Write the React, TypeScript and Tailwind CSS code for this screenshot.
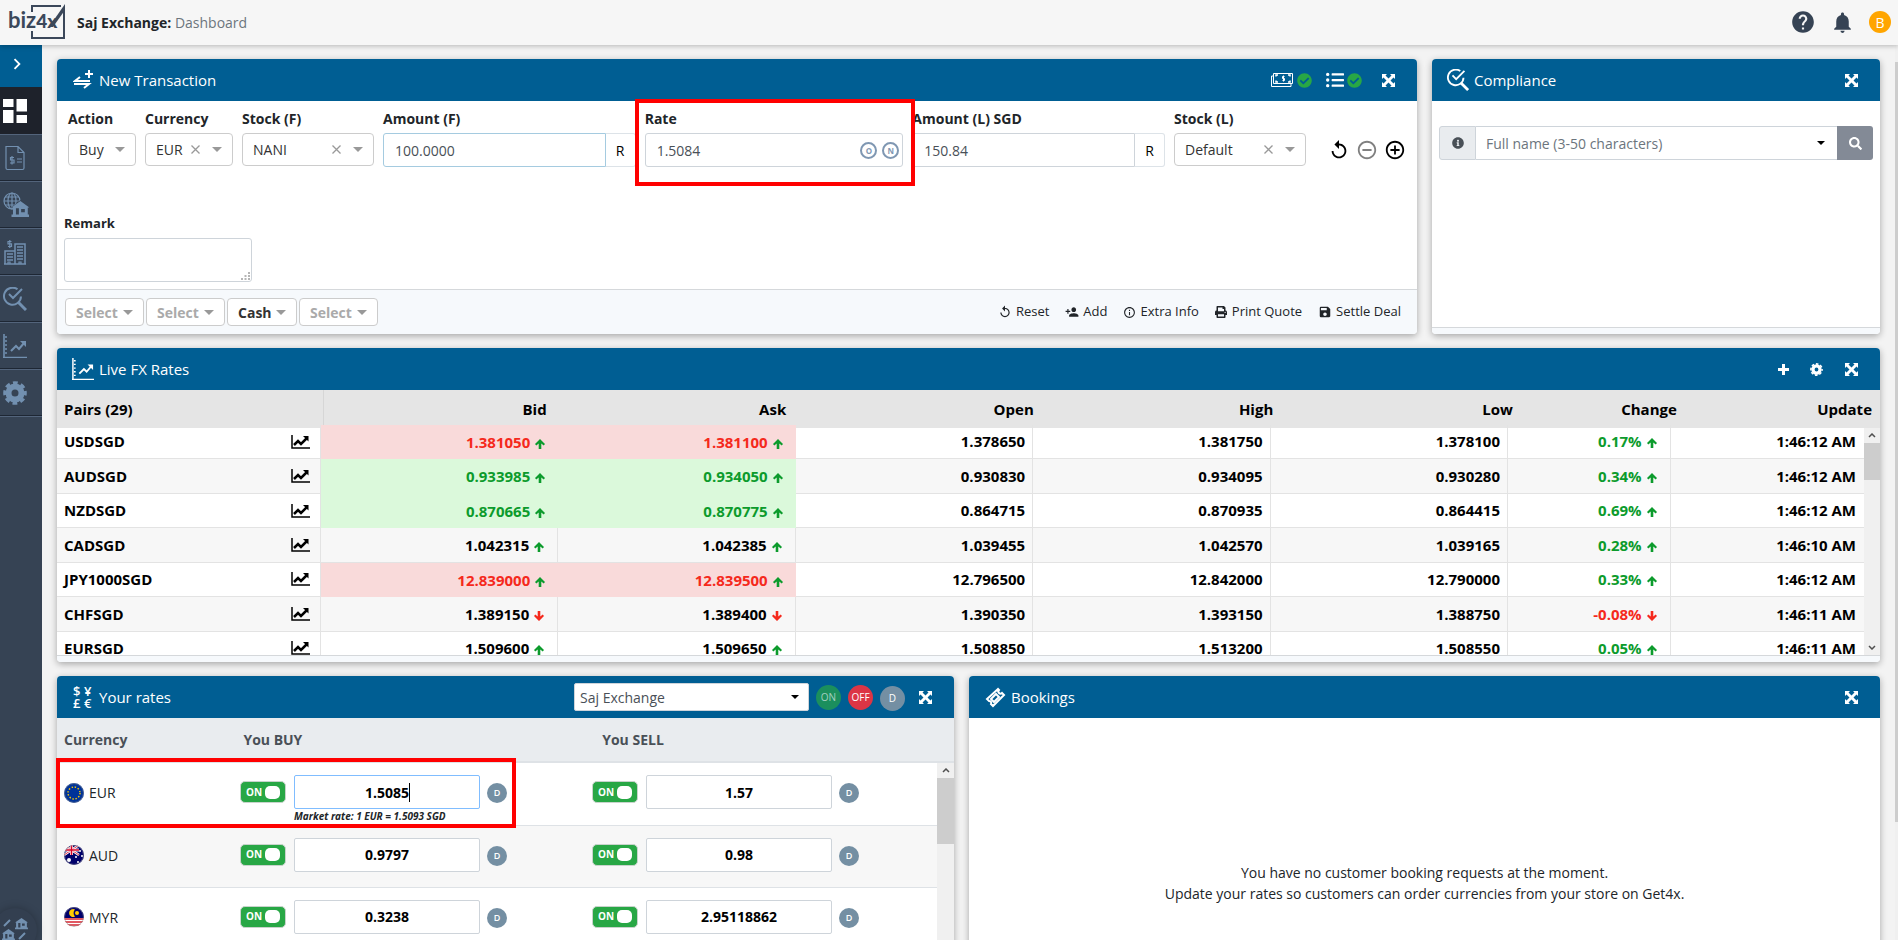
import type { PropsWithChildren, ReactNode } from "react";
import { FaCheckCircle, FaInfoCircle, FaListUl, FaPrint, FaSearch } from "react-icons/fa";
import {
  MdAddCircleOutline,
  MdChevronRight,
  MdHelp,
  MdInfoOutline,
  MdNotifications,
  MdPersonAdd,
  MdRemoveCircleOutline,
  MdReplay,
  MdSave,
} from "react-icons/md";
import clsx from "clsx";

type Trend = "up" | "down";
type Flash = "red" | "green" | null;

interface Pair {
  name: string;
  bid: string;
  ask: string;
  open: string;
  high: string;
  low: string;
  change: string;
  trend: Trend;
  flash: Flash;
  update: string;
}

const PAIRS: Pair[] = [
  { name: "USDSGD", bid: "1.381050", ask: "1.381100", open: "1.378650", high: "1.381750", low: "1.378100", change: "0.17%", trend: "up", flash: "red", update: "1:46:12 AM" },
  { name: "AUDSGD", bid: "0.933985", ask: "0.934050", open: "0.930830", high: "0.934095", low: "0.930280", change: "0.34%", trend: "up", flash: "green", update: "1:46:12 AM" },
  { name: "NZDSGD", bid: "0.870665", ask: "0.870775", open: "0.864715", high: "0.870935", low: "0.864415", change: "0.69%", trend: "up", flash: "green", update: "1:46:12 AM" },
  { name: "CADSGD", bid: "1.042315", ask: "1.042385", open: "1.039455", high: "1.042570", low: "1.039165", change: "0.28%", trend: "up", flash: null, update: "1:46:10 AM" },
  { name: "JPY1000SGD", bid: "12.839000", ask: "12.839500", open: "12.796500", high: "12.842000", low: "12.790000", change: "0.33%", trend: "up", flash: "red", update: "1:46:12 AM" },
  { name: "CHFSGD", bid: "1.389150", ask: "1.389400", open: "1.390350", high: "1.393150", low: "1.388750", change: "-0.08%", trend: "down", flash: null, update: "1:46:11 AM" },
  { name: "EURSGD", bid: "1.509600", ask: "1.509650", open: "1.508850", high: "1.513200", low: "1.508550", change: "0.05%", trend: "up", flash: null, update: "1:46:11 AM" },
];

const RATES = [
  { code: "EUR", buy: "1.5085", sell: "1.57", market: "Market rate: 1 EUR = 1.5093 SGD" },
  { code: "AUD", buy: "0.9797", sell: "0.98" },
  { code: "MYR", buy: "0.3238", sell: "2.95118862" },
];

/* ---------- icons ---------- */

function Logo() {
  return (
    <svg width="60" height="36" viewBox="0 0 60 36" role="img" aria-label="biz4x">
      <path d="M25 8V2H54M25 27v7h32V4" fill="none" stroke="#3b485a" strokeWidth="2" />
      <path d="M58 0 42 23h4L58 6z" fill="#3b485a" />
      <text x="1" y="24" fontFamily="Lato, sans-serif" fontWeight="700" fontSize="22" fill="#3b485a">
        biz<tspan fontWeight="900" fontSize="19">4x</tspan>
      </text>
    </svg>
  );
}

function TransferIcon() {
  return (
    <svg width="20" height="20" viewBox="0 0 20 20" fill="none" stroke="currentColor" strokeWidth="2">
      <path d="M17 11H2l5-4M1 14h15l-5 4M16 0v8M12 4h8" />
    </svg>
  );
}

function ExpandIcon() {
  return (
    <svg width="13" height="13" viewBox="0 0 13 13" fill="currentColor">
      <path d="M0 0h5L3.500 1.500l3 3 3-3L8 0h5v5l-1.500-1.500-3 3 3 3L13 8v5H8l1.500-1.500-3-3-3 3L5 13H0V8l1.500 1.500 3-3-3-3L0 5z" />
    </svg>
  );
}

function PlusIcon() {
  return (
    <svg width="11" height="11" viewBox="0 0 11 11" fill="currentColor">
      <path d="M4 0h3v4h4v3H7v4H4V7H0V4h4z" />
    </svg>
  );
}

function GearIcon({ size }: { size: number }) {
  return (
    <svg width={size} height={size} viewBox="0 0 24 24" fill="none" stroke="currentColor">
      <circle cx="12" cy="12" r="6.500" strokeWidth="6" />
      <circle cx="12" cy="12" r="10.300" strokeWidth="3" strokeDasharray="4.800 3.290" strokeDashoffset="2.400" />
    </svg>
  );
}

function AxisChartIcon({ size }: { size: number }) {
  return (
    <svg width={size} height={size} viewBox="0 0 24 24" fill="none" stroke="currentColor">
      <path d="M1 0v24M0 23.500h24" strokeWidth="1.600" />
      <path d="M2 3h2M2 7h2M2 11h2M2 15h2M2 19h2" strokeWidth="1.500" />
      <path d="m8 17 5-5 3 3 5-6" strokeWidth="2" />
      <path d="M17 7h6v6z" fill="currentColor" stroke="none" />
    </svg>
  );
}

function SearchCheckIcon({ size }: { size: number }) {
  return (
    <svg width={size} height={size} viewBox="0 0 24 24" fill="none" stroke="currentColor">
      <path d="M14.500 2.300A8.500 8.500 0 1 0 18 9.500" strokeWidth="2" />
      <path d="m6 7 4 4 9-9" strokeWidth="2" />
      <path d="m15 15 8 8" strokeWidth="3" />
    </svg>
  );
}

function TicketIcon() {
  return (
    <svg width="21" height="21" viewBox="0 0 21 21" fill="none" stroke="currentColor" strokeWidth="2">
      <path d="M13 2 2 12l2 2a2 2 0 0 1 2 3l2 2 11-11-2-2a2 2 0 0 1-3-3z" />
      <path d="m6 12 5-5 3 3-5 5z" />
    </svg>
  );
}

function CurrenciesIcon() {
  return (
    <svg width="20" height="24" viewBox="0 0 20 24" fill="currentColor" fontSize="13" fontWeight="600" aria-hidden="true">
      <text x="0" y="11">$</text>
      <text x="11" y="11">¥</text>
      <text x="0" y="23">£</text>
      <text x="11" y="23">€</text>
    </svg>
  );
}

function CashIcon() {
  return (
    <svg width="24" height="16" viewBox="0 0 24 16" fill="none" stroke="currentColor">
      <path d="M3.500 1.500h19v10h-19zM3 4H1.500v10.500H21V12" />
      <path d="M6 4.500V3h2M18 3h2v1.500M6 8.500V10h2M18 10h2V8.500" strokeWidth="1.500" />
      <path d="M14.500 4.500h-2v2h2v2h-2M13.500 3.500v6" />
    </svg>
  );
}

function LineChartIcon() {
  return (
    <svg width="19" height="14" viewBox="0 0 19 14" fill="none" stroke="currentColor" strokeWidth="2">
      <path d="M1 0v13h18" strokeWidth="1.500" />
      <path d="m3 10 4-4 3 3 6-6" strokeWidth="2.500" />
      <path d="M12 1h5.500v5.500z" fill="currentColor" stroke="none" />
    </svg>
  );
}

function HouseShape() {
  return <path fillRule="evenodd" d="M12 0 0 8h2v9H0v3h24v-3h-2V8h2zM6 9h4v8H6zM13 10h5v4h-5z" />;
}

function DocumentIcon() {
  return (
    <svg width="24" height="26" viewBox="0 0 24 26" fill="none" stroke="currentColor">
      <path d="M3 1.500h12l6 6V23a1.500 1.500 0 0 1-1.500 1.500h-15A1.500 1.500 0 0 1 3 23zM15 1.500v6h6" strokeWidth="1.200" />
      <path d="M11 12.500H7.500v2.500H11v3H7M9 11v8.500M14 14h5M14 17h5" strokeWidth="1.200" />
    </svg>
  );
}

function BranchIcon() {
  return (
    <svg width="26" height="26" viewBox="0 0 26 26" fill="currentColor">
      <g fill="none" stroke="currentColor" strokeWidth="1.200">
        <circle cx="9" cy="9" r="8" />
        <ellipse cx="9" cy="9" rx="4" ry="8" />
        <path d="M9 1v16M1 9h16M2 5h14M2 13h14" />
      </g>
      <path d="M17.500 8 8 16h2v9h16v-9z" fill="#364354" />
      <g transform="translate(8.500 9) scale(.74 .8)">
        <HouseShape />
      </g>
    </svg>
  );
}

function BuildingsIcon() {
  return (
    <svg width="24" height="26" viewBox="0 0 24 26" fill="none" stroke="currentColor">
      <path d="M2 25V12h10M12 25V5h10v20M1 25h22" strokeWidth="1.500" />
      <path d="M4 15h6M4 18h6M4 21h6M14 8h6M14 11h6M14 14h6M14 17h6M14 20h6" strokeWidth="1.500" />
      <path d="M8.500 2.500H5v2.300h3.500v2.700H5M6.800 1v8M5 25v-2h2v2M16 25v-2h2v2" strokeWidth="1.200" />
    </svg>
  );
}

function Caret({ className }: { className?: string }) {
  return (
    <svg width="10" height="5" viewBox="0 0 10 5" className={clsx("pointer-events-none shrink-0", className)}>
      <path d="M0 0h10L5 5z" fill="currentColor" />
    </svg>
  );
}

function Flag({ code }: { code: string }) {
  return (
    <svg width="20" height="20" viewBox="0 0 20 20" className="shrink-0 rounded-full" aria-hidden="true">
      {code === "EUR" && (
        <>
          <path d="M0 0h20v20H0z" fill="#003399" />
          <circle cx="10" cy="10" r="6" fill="none" stroke="#ffcc00" strokeWidth="1.400" strokeDasharray="1.400 1.740" />
        </>
      )}
      {code === "AUD" && (
        <>
          <path d="M0 0h20v20H0z" fill="#00006b" />
          <path d="m0 0 15 10M15 0 0 10" stroke="#fff" strokeWidth="2.500" />
          <path d="m0 0 15 10M15 0 0 10" stroke="#e0314b" />
          <path d="M7.500 0v10M0 5h15" stroke="#fff" strokeWidth="3" />
          <path d="M7.500 0v10M0 5h15" stroke="#d80027" strokeWidth="1.600" />
          <g fill="#fff">
            <circle cx="5" cy="15" r="2" />
            <circle cx="14" cy="17" r="1" />
            <circle cx="12" cy="12" r="1" />
            <circle cx="18" cy="11" r="1" />
            <circle cx="16" cy="6" r="1" />
          </g>
        </>
      )}
      {code === "MYR" && (
        <>
          <path d="M0 0h20v20H0z" fill="#fff" />
          <path d="M0 12h20M0 15h20M0 18h20" stroke="#d8232f" strokeWidth="1.500" />
          <path d="M0 0h20v11H0z" fill="#00006b" />
          <path d="M11 2.500a4 4 0 1 0 0 7 5 5 0 0 1 0-7" fill="#ffcc00" />
          <circle cx="13" cy="6" r="2" fill="#ffcc00" />
        </>
      )}
      <circle cx="10" cy="10" r="9.500" fill="none" stroke="#888" strokeOpacity=".6" />
    </svg>
  );
}

/* ---------- shared pieces ---------- */

interface PanelProps extends PropsWithChildren {
  title: string;
  icon: ReactNode;
  actions?: ReactNode;
}

function Panel({ title, icon, actions, children }: PanelProps) {
  return (
    <section className="flex min-w-0 flex-col rounded-[4px] bg-white shadow-[0_2px_7px_rgba(0,0,0,0.32)]">
      <header className="flex h-[42px] shrink-0 items-center gap-1 rounded-t-[4px] bg-[#005e93] pl-[14px] pr-[22px] text-white">
        <span className="flex w-6 justify-center">{icon}</span>
        <h2 className="text-[15px]">{title}</h2>
        <div className="ml-auto flex items-center">
          {actions}
          <button type="button" aria-label={`Expand ${title}`}>
            <ExpandIcon />
          </button>
        </div>
      </header>
      {children}
    </section>
  );
}

interface PickerProps {
  id: string;
  value: string;
  clearable?: boolean;
}

function Picker({ id, value, clearable }: PickerProps) {
  return (
    <div className="flex h-[33px] items-center rounded-[4px] border border-[#ccc] bg-white pl-[10px] pr-[10px] text-[#333]">
      <select id={id} className="min-w-0 flex-1 appearance-none bg-transparent outline-none">
        <option>{value}</option>
      </select>
      {clearable && (
        <button type="button" aria-label={`Clear ${id}`} className="mr-3 text-[#999]">
          <svg width="9" height="9" viewBox="0 0 9 9" stroke="currentColor" strokeWidth="1.300">
            <path d="m.5.5 8 8M8.500.5l-8 8" />
          </svg>
        </button>
      )}
      <Caret className="text-[#999]" />
    </div>
  );
}

function Field({ id, label, children }: PropsWithChildren<{ id: string; label: string }>) {
  return (
    <div className="relative min-w-0">
      <label htmlFor={id} className="mb-1 block whitespace-nowrap font-bold leading-5 text-[#212529]">
        {label}
      </label>
      {children}
    </div>
  );
}

function AmountInput({ id, value, active }: { id: string; value: string; active?: boolean }) {
  return (
    <div className="flex h-[34px]">
      <input
        id={id}
        defaultValue={value}
        className={clsx(
          "min-w-0 flex-1 rounded-l-[3px] border px-[11px] text-[#495057] outline-none",
          active ? "border-[#a5cbe0]" : "border-[#ced4da]",
        )}
      />
      <button type="button" className="w-[30px] rounded-r-[3px] border border-l-0 border-[#dde3e8] text-black">
        R
      </button>
    </div>
  );
}

function FooterPicker({ id, value, width }: { id: string; value: string; width: string }) {
  return (
    <div className={clsx("flex h-7 items-center rounded-[4px] border border-[#ccc] bg-white px-[10px]", width)}>
      <select
        id={id}
        aria-label={id}
        className={clsx(
          "min-w-0 flex-1 appearance-none bg-transparent font-bold outline-none",
          value === "Select" ? "text-[#aaa]" : "text-[#333]",
        )}
      >
        <option>{value}</option>
      </select>
      <Caret className="text-[#999]" />
    </div>
  );
}

function ScrollArrow({ down }: { down?: boolean }) {
  return (
    <svg width="8" height="5" viewBox="0 0 8 5" fill="none" stroke="#505050" strokeWidth="1.500">
      <path d={down ? "m1 1 3 3 3-3" : "m1 4 3-3 3 3"} />
    </svg>
  );
}

function TrendArrow({ trend }: { trend: Trend }) {
  return (
    <svg
      width="10"
      height="10"
      viewBox="0 0 10 10"
      fill="currentColor"
      className={clsx("ml-[5px] inline", trend === "up" ? "text-[#0c9b2c]" : "rotate-180 text-[#f5291c]")}
    >
      <path d="m5 0 5 5-1.300 1.400-2.400-2V10H3.700V4.400l-2.400 2L0 5z" />
    </svg>
  );
}

/* ---------- page parts ---------- */

function TopBar() {
  return (
    <header className="relative z-10 flex h-[45px] shrink-0 items-center bg-[#f6f6f6] pb-px pl-[7px] pr-[7px] shadow-[0_1px_5px_rgba(0,0,0,0.25)]">
      <Logo />
      <h1 className="ml-[10px] text-[#212529]">
        <b>Saj Exchange:</b> <span className="text-[#6c757d]">Dashboard</span>
      </h1>
      <div className="ml-auto flex items-center text-[#364354]">
        <button type="button" aria-label="Help">
          <MdHelp size={26} />
        </button>
        <button type="button" aria-label="Notifications" className="ml-[14px]">
          <MdNotifications size={25} />
        </button>
        <button type="button" className="ml-[14px] size-[22px] rounded-full bg-[#ffa500] text-white">
          B
        </button>
      </div>
    </header>
  );
}

const NAV_ITEMS = [
  { label: "Documents", icon: <DocumentIcon /> },
  { label: "Branches", icon: <BranchIcon /> },
  { label: "Accounts", icon: <BuildingsIcon /> },
  { label: "Compliance", icon: <SearchCheckIcon size={24} /> },
  { label: "Rates", icon: <AxisChartIcon size={24} /> },
  { label: "Settings", icon: <GearIcon size={24} /> },
];

function Sidebar() {
  return (
    <nav className="flex w-[42px] shrink-0 flex-col bg-[#364354] text-[#7290b0]">
      <button type="button" aria-label="Open menu" className="flex h-[42px] shrink-0 items-center justify-center bg-[#005e93] pb-1 pr-2 text-white">
        <MdChevronRight size={22} />
      </button>
      <a href="#dashboard" aria-label="Dashboard" className="flex h-[47px] shrink-0 items-center bg-[#1e222b] pl-[3px] text-white">
        <svg width="24" height="24" viewBox="0 0 24 24" fill="currentColor">
          <path d="M0 0h10.500v8H0zM13.500 0H24v12.500H13.500zM0 11h10.500v13H0zM13.500 16H24v8H13.500z" />
        </svg>
      </a>
      {NAV_ITEMS.map((item) => (
        <a
          key={item.label}
          href={`#${item.label.toLowerCase()}`}
          aria-label={item.label}
          className="flex h-[47px] shrink-0 items-center border-b border-t border-b-[#1e2734] border-t-[#53647b] pl-[3px]"
        >
          {item.icon}
        </a>
      ))}
      <div className="border-t border-[#53647b]" />
      <button
        type="button"
        aria-label="Switch branch"
        className="-mb-3 -ml-[7px] mt-auto flex size-11 shrink-0 items-center justify-center rounded-full bg-[#333f50] shadow-[0_0_8px_rgba(0,0,0,0.25)]"
      >
        <svg width="26" height="24" viewBox="0 0 26 24" fill="currentColor">
          <g transform="translate(13 0) scale(.54 .56)">
            <HouseShape />
          </g>
          <g transform="translate(0 11) scale(.54 .56)">
            <HouseShape />
          </g>
          <path d="m2 8 6-6M17 21l6-6" stroke="currentColor" strokeWidth="2" />
        </svg>
      </button>
    </nav>
  );
}

function NewTransaction() {
  return (
    <Panel
      title="New Transaction"
      icon={<TransferIcon />}
      actions={
        <>
          <button type="button" aria-label="Cash status" className="mr-[14px] flex items-center gap-[3px]">
            <CashIcon />
            <FaCheckCircle size={15} className="text-[#28a745]" />
          </button>
          <button type="button" aria-label="List status" className="mr-5 flex items-center gap-[3px]">
            <FaListUl size={18} />
            <FaCheckCircle size={15} className="text-[#28a745]" />
          </button>
        </>
      }
    >
      <form className="flex flex-1 flex-col">
        <div className="grid grid-cols-[68px_88px_132px_253fr_259fr_253fr_132px_auto] gap-x-[9px] pl-[11px] pr-[11px] pt-2">
          <Field id="action" label="Action">
            <Picker id="action" value="Buy" />
          </Field>
          <Field id="currency" label="Currency">
            <Picker id="currency" value="EUR" clearable />
          </Field>
          <Field id="stock-f" label="Stock (F)">
            <Picker id="stock-f" value="NANI" clearable />
          </Field>
          <Field id="amount-f" label="Amount (F)">
            <AmountInput id="amount-f" value="100.0000" active />
          </Field>
          <Field id="rate" label="Rate">
            <div className="flex h-[34px] items-center gap-[5px] rounded-[3px] border border-[#ced4da] pr-[3px]">
              <input id="rate" defaultValue="1.5084" className="h-full min-w-0 flex-1 px-[11px] text-[#495057] outline-none" />
              <button type="button" className="size-[17px] rounded-full border-2 border-[#7f97b2] text-[8px]/[13px] font-bold text-[#7f97b2]">
                O
              </button>
              <button type="button" className="size-[17px] rounded-full border-2 border-[#7f97b2] text-[8px]/[13px] font-bold text-[#7f97b2]">
                N
              </button>
            </div>
            <div className="pointer-events-none absolute -bottom-[19px] -left-[10px] -right-3 -top-[10px] z-10 border-4 border-[#ff0000]" />
          </Field>
          <Field id="amount-l" label="Amount (L) SGD">
            <AmountInput id="amount-l" value="150.84" />
          </Field>
          <Field id="stock-l" label="Stock (L)">
            <Picker id="stock-l" value="Default" clearable />
          </Field>
          <div className="flex items-center gap-[6px] self-end pb-[6px] pl-[13px] text-black">
            <button type="button" aria-label="Reset row">
              <MdReplay size={22} />
            </button>
            <button type="button" aria-label="Remove row" className="text-[#808080]">
              <MdRemoveCircleOutline size={22} />
            </button>
            <button type="button" aria-label="Add row">
              <MdAddCircleOutline size={22} />
            </button>
          </div>
        </div>
        <div className="flex flex-col items-start pl-[7px] pt-[46px]">
          <label htmlFor="remark" className="mb-[5px] text-[13px]/5 font-bold text-[#212529]">
            Remark
          </label>
          <div className="relative flex">
            <textarea id="remark" className="h-11 w-[188px] resize-none rounded-[3px] border border-[#ced4da] outline-none" />
            <svg width="9" height="9" viewBox="0 0 9 9" fill="#b5b5b5" className="absolute bottom-[2px] right-[2px]">
              <path d="M0 7h2v2H0zM3.500 4h2v2h-2zM3.500 7h2v2h-2zM7 1h2v2H7zM7 4h2v2H7zM7 7h2v2H7z" />
            </svg>
          </div>
        </div>
        <div className="mt-[7px] flex h-[45px] items-center justify-between rounded-b-[4px] border-t border-[#d5d8db] bg-[#f6f9fc] pl-2 pr-4">
          <div className="flex gap-[2px]">
            <FooterPicker id="Customer" value="Select" width="w-[79px]" />
            <FooterPicker id="Source" value="Select" width="w-[79px]" />
            <FooterPicker id="Payment" value="Cash" width="w-[70px]" />
            <FooterPicker id="Purpose" value="Select" width="w-[79px]" />
          </div>
          <div className="flex gap-4 text-[13px] text-[#212529]">
            <button type="button" className="flex items-center gap-1">
              <MdReplay size={14} /> Reset
            </button>
            <button type="button" className="flex items-center gap-1">
              <MdPersonAdd size={14} /> Add
            </button>
            <button type="button" className="flex items-center gap-1">
              <MdInfoOutline size={13} /> Extra Info
            </button>
            <button type="button" className="flex items-center gap-[5px]">
              <FaPrint size={12} /> Print Quote
            </button>
            <button type="button" className="flex items-center gap-1">
              <MdSave size={14} /> Settle Deal
            </button>
          </div>
        </div>
      </form>
    </Panel>
  );
}

function Compliance() {
  return (
    <Panel title="Compliance" icon={<SearchCheckIcon size={22} />}>
      <form className="flex h-[59px] items-end px-[7px]">
        <span className="flex h-[34px] w-[37px] items-center justify-center rounded-l-[3px] border border-[#ced4da] bg-[#e9ecef] text-[#495057]">
          <FaInfoCircle size={12} />
        </span>
        <div className="flex h-[34px] flex-1 items-center border-y border-[#ced4da] pr-3">
          <input
            aria-label="Full name"
            placeholder="Full name (3-50 characters)"
            className="min-w-0 flex-1 px-[10px] outline-none placeholder:text-[#6c757d]"
          />
          <svg width="8" height="4" viewBox="0 0 8 4">
            <path d="M0 0h8L4 4z" />
          </svg>
        </div>
        <button type="button" aria-label="Search" className="flex h-[34px] w-9 items-center justify-center rounded-r-[3px] bg-[#838a96] text-white">
          <FaSearch size={13} />
        </button>
      </form>
      <div className="mt-auto h-[7px] rounded-b-[4px] border-t border-[#d5d8db] bg-[#f6f9fc]" />
    </Panel>
  );
}

function RateColumns() {
  return (
    <colgroup>
      <col className="w-[14.6%]" />
      <col className="w-[13.14%]" />
      <col className="w-[13.14%]" />
      <col className="w-[13.14%]" />
      <col className="w-[13.14%]" />
      <col className="w-[13.14%]" />
      <col className="w-[9%]" />
      <col />
    </colgroup>
  );
}

function QuoteCell({ value, pair }: { value: string; pair: Pair }) {
  return (
    <td
      className={clsx(
        "pr-[13px] text-right",
        pair.flash === "red" && "bg-[#f9dada] text-[#f5291c]",
        pair.flash === "green" && "bg-[#dbf9db] text-[#0c9b2c]",
        !pair.flash && "border-b border-r border-[#e3e3e3]",
      )}
    >
      {value}
      <TrendArrow trend={pair.trend} />
    </td>
  );
}

function LiveRates() {
  const cell = "border-b border-r border-[#e3e3e3] pr-[7px] text-right";
  return (
    <Panel
      title="Live FX Rates"
      icon={<AxisChartIcon size={22} />}
      actions={
        <>
          <button type="button" aria-label="Add pair" className="mr-[21px]">
            <PlusIcon />
          </button>
          <button type="button" aria-label="Rate settings" className="mr-[22px]">
            <GearIcon size={13} />
          </button>
        </>
      }
    >
      <div className="bg-[#e5e5e5]">
        <table className="h-[38px] w-full table-fixed text-[15px] font-bold text-black">
          <RateColumns />
          <thead>
            <tr>
              <th className="border-r border-[#d6d6d6] pl-[7px] text-left">Pairs (29)</th>
              <th className="pr-4 text-right">Bid</th>
              <th className="pr-4 text-right">Ask</th>
              <th className="pr-2 text-right">Open</th>
              <th className="pr-2 text-right">High</th>
              <th className="pr-2 text-right">Low</th>
              <th className="pr-2 text-right">Change</th>
              <th className="pr-2 text-right">Update</th>
            </tr>
          </thead>
        </table>
      </div>
      {/* flashing cells of the first row bleed slightly over the heading */}
      <div className="-mt-[3px] flex h-[230px] overflow-hidden">
        <div className="min-w-0 flex-1">
          <table className="h-[241px] w-full table-fixed border-separate border-spacing-0 text-[15px] font-bold text-black">
            <RateColumns />
            <tbody>
              {PAIRS.map((pair) => (
                <tr key={pair.name} className="even:bg-[#f7f7f7]">
                  <td className="border-b border-r border-[#e3e3e3] pl-[7px] pr-[10px]">
                    <div className="flex items-center justify-between">
                      {pair.name}
                      <LineChartIcon />
                    </div>
                  </td>
                  <QuoteCell value={pair.bid} pair={pair} />
                  <QuoteCell value={pair.ask} pair={pair} />
                  <td className={cell}>{pair.open}</td>
                  <td className={cell}>{pair.high}</td>
                  <td className={cell}>{pair.low}</td>
                  <td
                    className={clsx(
                      "border-b border-r border-[#e3e3e3] pr-[13px] text-right",
                      pair.trend === "up" ? "text-[#0c9b2c]" : "text-[#f5291c]",
                    )}
                  >
                    {pair.change}
                    <TrendArrow trend={pair.trend} />
                  </td>
                  <td className="border-b border-[#e3e3e3] pr-2 text-right">{pair.update}</td>
                </tr>
              ))}
            </tbody>
          </table>
        </div>
        <div className="mt-[3px] flex w-4 flex-col items-center bg-[#f0f0f0]">
          <span className="flex h-[15px] items-center">
            <ScrollArrow />
          </span>
          <span className="h-[37px] w-full bg-[#cdcdcd]" />
          <span className="mt-auto flex h-4 items-center">
            <ScrollArrow down />
          </span>
        </div>
      </div>
      <div className="h-[7px] rounded-b-[4px] border-t border-[#d5d8db] bg-[#f6f9fc]" />
    </Panel>
  );
}

interface RateEntryProps {
  id: string;
  value: string;
  market?: string;
}

function RateEntry({ id, value, market }: RateEntryProps) {
  return (
    <div className="flex items-start">
      <label className="mt-[6px] flex h-[22px] w-[46px] items-center justify-between rounded-[5px] border border-[#c9d3cc] bg-[#28a745] px-[5px] text-[10px] font-bold text-white">
        <input type="checkbox" defaultChecked aria-label={`${id} enabled`} className="peer sr-only" />
        ON
        <span className="h-[13px] w-[15px] rounded-[5px] bg-white" />
      </label>
      <div className="ml-2 w-[186px]">
        <div className="relative">
          <input
            aria-label={id}
            defaultValue={value}
            className={clsx(
              "block h-[34px] w-full rounded-[2px] border bg-white text-center font-bold text-black outline-none",
              market ? "border-[#80bdff]" : "border-[#ced4da]",
            )}
          />
          {market && <span className="absolute left-[calc(50%+22px)] top-2 h-[19px] w-px bg-black" />}
        </div>
        {market && <p className="whitespace-nowrap text-[10px]/[14px] font-bold italic text-[#212529]">{market}</p>}
      </div>
      <button type="button" className="ml-[7px] mt-2 size-5 rounded-full bg-[#748fa3] text-[9px]/5 font-semibold text-white">
        D
      </button>
    </div>
  );
}

function YourRates() {
  return (
    <Panel
      title="Your rates"
      icon={<CurrenciesIcon />}
      actions={
        <>
          <div className="mr-[7px] flex h-7 w-[235px] items-center rounded-[2px] border border-[#ced4da] bg-white px-[5px] text-[#495057]">
            <select aria-label="Branch" className="flex-1 appearance-none bg-transparent outline-none">
              <option>Saj Exchange</option>
            </select>
            <svg width="8" height="4" viewBox="0 0 8 4" className="mr-1">
              <path d="M0 0h8L4 4z" />
            </svg>
          </div>
          <button type="button" className="mr-[7px] size-[25px] rounded-full bg-[#1b8f5d] text-[10px] text-[#a3cfc0]">
            ON
          </button>
          <button type="button" className="mr-[7px] size-[25px] rounded-full bg-[#dc3545] text-[10px] text-white">
            OFF
          </button>
          <button type="button" className="mr-[14px] mt-[3px] size-[25px] rounded-full bg-[#748fa3] text-[10px] text-white">
            D
          </button>
        </>
      }
    >
      <table className="h-[45px] w-full table-fixed border-b-2 border-[#dee2e6] bg-[#e9ecef] font-bold text-[#495057]">
        <thead>
          <tr>
            <th className="w-1/5 pl-[7px] text-left">Currency</th>
            <th className="w-2/5 pl-[7px] text-left">You BUY</th>
            <th className="w-2/5 pl-[7px] text-left">You SELL</th>
          </tr>
        </thead>
      </table>
      <div className="flex flex-1">
        <div className="relative flex-1">
          <table className="w-full table-fixed text-[#212529]">
            <tbody>
              {RATES.map((rate) => (
                <tr key={rate.code} className="h-[62px] border-b border-[#dee2e6] align-top even:bg-[#f7f7f7]">
                  <td className="w-1/5 pl-[7px] pt-[19px]">
                    <div className="flex items-center gap-[5px]">
                      <Flag code={rate.code} />
                      {rate.code}
                    </div>
                  </td>
                  <td className="w-2/5 pl-[7px] pt-3">
                    <RateEntry id={`${rate.code} buy`} value={rate.buy} market={rate.market} />
                  </td>
                  <td className="w-2/5 pl-[7px] pt-3">
                    <RateEntry id={`${rate.code} sell`} value={rate.sell} />
                  </td>
                </tr>
              ))}
            </tbody>
          </table>
          <div className="pointer-events-none absolute -left-px -top-[5px] h-[70px] w-[460px] border-4 border-[#ff0000]" />
        </div>
        <div className="flex w-[17px] flex-col items-center bg-[#f0f0f0]">
          <span className="flex h-[15px] items-center">
            <ScrollArrow />
          </span>
          <span className="h-[66px] w-full bg-[#cdcdcd]" />
        </div>
      </div>
    </Panel>
  );
}

function Bookings() {
  return (
    <Panel title="Bookings" icon={<TicketIcon />}>
      <div className="flex flex-1 flex-col items-center pt-[144px] text-center leading-[21px] text-[#212529]">
        <p>You have no customer booking requests at the moment.</p>
        <p>Update your rates so customers can order currencies from your store on Get4x.</p>
      </div>
    </Panel>
  );
}

export default function App() {
  return (
    <div className="flex h-screen flex-col overflow-hidden bg-[#f3f3f3] font-['Open_Sans',sans-serif] text-[14px]">
      <TopBar />
      <div className="flex min-h-0 flex-1">
        <Sidebar />
        <main className="flex min-w-0 flex-1 flex-col gap-[14px] overflow-hidden px-[15px] pt-[14px]">
          <div className="grid shrink-0 grid-cols-[1360fr_448fr] gap-[15px]">
            <NewTransaction />
            <Compliance />
          </div>
          <LiveRates />
          <div className="grid shrink-0 grid-cols-[897fr_911fr] gap-[15px]">
            <YourRates />
            <Bookings />
          </div>
        </main>
        <div className="w-[3px] shrink-0 bg-[#f0f0f0] pt-[17px]">
          <div className="h-[760px] bg-[#cdcdcd]" />
        </div>
      </div>
    </div>
  );
}
